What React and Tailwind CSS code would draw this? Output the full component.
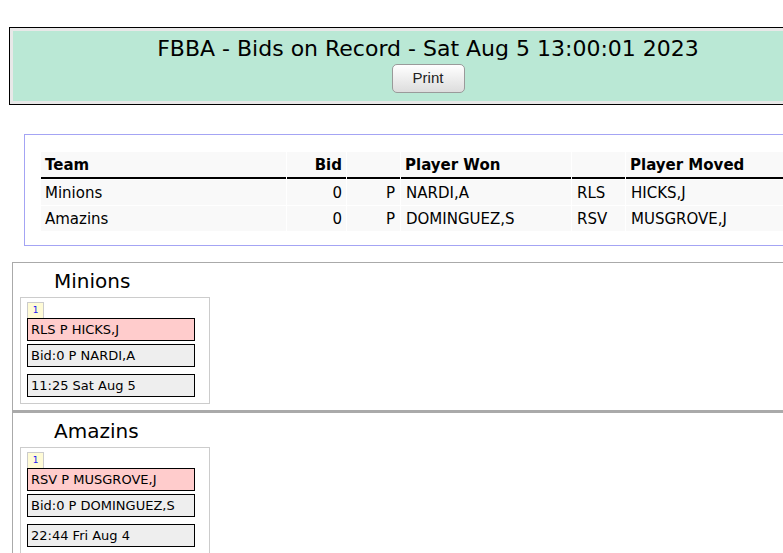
import React from 'react'

const bids = [
  { team: 'Minions', bid: 0, pos: 'P', won: 'NARDI,A', code: 'RLS', moved: 'HICKS,J', time: '11:25 Sat Aug 5' },
  { team: 'Amazins', bid: 0, pos: 'P', won: 'DOMINGUEZ,S', code: 'RSV', moved: 'MUSGROVE,J', time: '22:44 Fri Aug 4' },
]

function TeamSection({ b, first }) {
  return (
    <div className={first ? 'border border-[#aaaaaa]' : 'border border-t-0 border-[#aaaaaa] border-t-[2px]'}>
      <div className="h-[34px] pl-[41px] pt-[3px] flex items-center text-[20px] text-black">{b.team}</div>
      <div className="ml-[7px] mb-[6px] w-[190px] border border-[#cccccc] pl-[6px] pt-[4px] pb-[6px]">
        <div className="w-[17px] h-[16px] bg-[#fffbd6] border border-b-0 border-[#cccccc] text-[9px] leading-[15px] text-center text-[#2020ee]">1</div>
        <div className="w-[168px] h-[23px] bg-[#ffcccc] border border-black text-[13px] leading-[21px] pl-[3px]">{b.code} {b.pos} {b.moved}</div>
        <div className="mt-[3px] w-[168px] h-[23px] bg-[#eeeeee] border border-black text-[13px] leading-[21px] pl-[3px]">Bid:{b.bid} {b.pos} {b.won}</div>
        <div className="mt-[7px] w-[168px] h-[23px] bg-[#eeeeee] border border-black text-[13px] leading-[21px] pl-[3px]">{b.time}</div>
      </div>
    </div>
  )
}

export default function App() {
  return (
    <div className="w-[783px] h-[553px] overflow-hidden bg-white text-black" style={{ fontFamily: '"DejaVu Sans", Verdana, sans-serif' }}>
      <div className="pt-[27px] pl-[9px]">
        <div className="w-[838px] border border-black bg-[#e8e8e8] p-[3px]">
          <div className="h-[70px] bg-[#bae8d5] pt-[4px] flex flex-col items-center">
            <div className="text-[22px] leading-[27px]">FBBA - Bids on Record - Sat Aug 5 13:00:01 2023</div>
            <button className="mt-[2px] w-[73px] h-[29px] rounded-[5px] border border-[#9a9a9a] bg-gradient-to-b from-white to-[#dddddd] text-[15px] text-[#222]" style={{ fontFamily: '"Liberation Sans", Arial, sans-serif' }}>Print</button>
          </div>
        </div>
      </div>

      <div className="mt-[29px] ml-[24px] w-[900px] border border-[#a4a4f4] px-[15px] pt-[16px] pb-[13px]">
        <table className="border-separate border-spacing-[1px] text-[15px]">
          <thead>
            <tr className="bg-[#f9f9f9]">
              <th className="w-[245px] h-[26px] text-left pl-[4px] pt-[2px] font-bold border-b-2 border-black">Team</th>
              <th className="w-[59px] text-right pr-[4px] pt-[2px] font-bold border-b-2 border-black">Bid</th>
              <th className="w-[53px] border-b-2 border-black"></th>
              <th className="w-[170px] text-left pl-[4px] pt-[2px] font-bold border-b-2 border-black">Player Won</th>
              <th className="w-[53px] border-b-2 border-black"></th>
              <th className="w-[200px] text-left pl-[4px] pt-[2px] font-bold border-b-2 border-black">Player Moved</th>
            </tr>
          </thead>
          <tbody>
            {bids.map(b => (
              <tr key={b.team} className="bg-[#f9f9f9]">
                <td className="h-[25px] pl-[4px] pt-[2px]">{b.team}</td>
                <td className="text-right pr-[4px] pt-[2px]">{b.bid}</td>
                <td className="text-right pr-[5px] pt-[2px]">{b.pos}</td>
                <td className="pl-[5px] pt-[2px]">{b.won}</td>
                <td className="pl-[5px] pt-[2px]">{b.code}</td>
                <td className="pl-[5px] pt-[2px]">{b.moved}</td>
              </tr>
            ))}
          </tbody>
        </table>
      </div>

      <div className="mt-[16px] ml-[12px] w-[900px]">
        {bids.map((b, i) => <TeamSection key={b.team} b={b} first={i === 0} />)}
      </div>
    </div>
  )
}
